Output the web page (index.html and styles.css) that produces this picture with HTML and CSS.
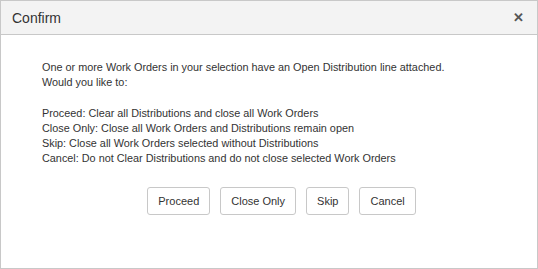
FILE: index.html
```html
<!DOCTYPE html>
<html lang="en">
<head>
    <meta charset="UTF-8">
    <title>Confirm</title>
    <link rel="stylesheet" href="styles.css">
</head>
<body>
    <div class="dialog">
        <div class="dialog-header">
            <span class="dialog-title">Confirm</span>
            <span class="dialog-close">&#x2715;</span>
        </div>
        <div class="dialog-body">
            <p>One or more Work Orders in your selection have an Open Distribution line attached.<br>
            Would you like to:</p>
            <p>Proceed: Clear all Distributions and close all Work Orders<br>
            Close Only: Close all Work Orders and Distributions remain open<br>
            Skip: Close all Work Orders selected without Distributions<br>
            Cancel: Do not Clear Distributions and do not close selected Work Orders</p>
        </div>
        <div class="dialog-buttons">
            <button class="btn">Proceed</button>
            <button class="btn">Close Only</button>
            <button class="btn">Skip</button>
            <button class="btn">Cancel</button>
        </div>
    </div>
</body>
</html>
```

FILE: styles.css
```css
/* General Styles */
body {
    margin: 0;
    font-family: 'Liberation Sans', Arial, sans-serif;
    color: #333;
}

.dialog {
    box-sizing: border-box;
    width: 538px;
    height: 269px;
    border: 1px solid #c8c8c8;
    background: #fff;
}

/* Header */
.dialog-header {
    display: flex;
    justify-content: space-between;
    align-items: center;
    height: 33px;
    padding: 0 13px 0 11px;
    background: #f3f3f3;
    border-bottom: 1px solid #c8c8c8;
}

.dialog-title {
    font-size: 14px;
    color: #333;
}

.dialog-close {
    font-size: 13px;
    font-weight: bold;
    color: #555;
}

/* Body */
.dialog-body {
    padding: 25px 0 0 41px;
    font-size: 10.85px;
    line-height: 15.3px;
}

.dialog-body p {
    margin: 0 0 15px;
}

/* Buttons */
.dialog-buttons {
    display: flex;
    justify-content: center;
    gap: 10px;
    margin-top: 20px;
    padding-left: 25px;
}

.btn {
    height: 28px;
    padding: 0 10px;
    font-family: 'Liberation Sans', Arial, sans-serif;
    font-size: 11px;
    color: #333;
    background: #fff;
    border: 1px solid #c8c8c8;
    border-radius: 3px;
}
```
